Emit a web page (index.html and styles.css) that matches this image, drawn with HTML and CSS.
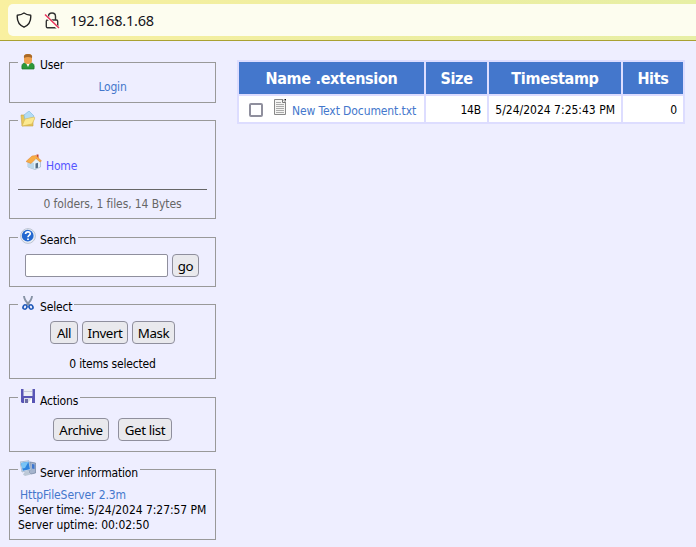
FILE: index.html
```html
<!DOCTYPE html>
<html lang="en">
<head>
<meta charset="utf-8">
<title>HFS /</title>
<link rel="stylesheet" href="styles.css">
</head>
<body>
<header class="toolbar">
  <div class="urlbar">
    <svg class="shield" width="16" height="16" viewBox="0 0 16 16"><path d="M8 1C6.300 2.300 4 3 1.300 3.200C.800 9 3.200 13.200 8 15.200C12.800 13.200 15.200 9 14.700 3.200C12 3 9.700 2.300 8 1Z" fill="none" stroke="#222" stroke-width="1.400" stroke-linejoin="round"/></svg>
    <svg class="lock" width="16" height="17" viewBox="0 0 16 17"><path d="M4.500 8V4.500Q4.500 1 8 1T11.500 4.500V8M3.500 8H12.500Q13.700 8 13.700 9.200V14.500Q13.700 15.700 12.500 15.700H3.500Q2.300 15.700 2.300 14.500V9.200Q2.300 8 3.500 8Z" fill="none" stroke="#333" stroke-width="1.400"/><path d="M1 3L14.500 16.500" stroke="#fffff0" stroke-width="3"/><path d="M1 2.500L15 16" stroke="#e8315b" stroke-width="1.500"/></svg>
    <span class="address">192.168.1.68</span>
  </div>
</header>
<main class="page">
  <aside class="sidebar">
    <section class="panel user">
      <h2 class="legend"><svg width="16" height="17" viewBox="0 0 16 17"><path d="M2 16Q1 10 5 10H11Q15 10 14 16Z" fill="#2c9838" stroke="#187526" stroke-width=".700"/><path d="M6 10L8 14L10 10Z" fill="#fff"/><rect x="4" y="1" width="8" height="10" rx="3.500" fill="#eda04d"/><path d="M4 5Q3 1 8 1T12 5Q8 3 4 5Z" fill="#a96928"/></svg><span>User</span></h2>
      <div class="login"><a>Login</a></div>
    </section>
    <section class="panel folder">
      <h2 class="legend"><svg width="16" height="17" viewBox="0 0 16 17"><path d="M1 4H5L7 6H13V15H2Z" fill="#e7c75a" stroke="#c7a345" stroke-width=".600"/><path d="M4 4L9 0L14 5L11 11L5 9Z" fill="#b3dcf6" stroke="#79b7df" stroke-width=".600"/><path d="M2 15L5 8L14 6Q15 6 14.500 8L12 13Z" fill="#fce990" stroke="#d3b451" stroke-width=".600"/></svg><span>Folder</span></h2>
      <div class="home"><svg width="16" height="16" viewBox="0 0 16 16"><path d="M2 6V13L9 15.500L14.500 13V6L9 3Z" fill="#e4f1fa" stroke="#91abc0" stroke-width=".600"/><path d="M2 8V13L8 15V9Z" fill="#bcd8eb"/><path d="M9.500 14.500V9.500L12 8.800V13.800Z" fill="#536c84"/><path d="M10.500 .500H12.500V5H10.500Z" fill="#c54028"/><path d="M0 7.500L6 2L10 1.500L15.500 7L14 8L10 4.500L5 9.500Z" fill="#f8ad45" stroke="#df8430" stroke-width=".500"/></svg><a>Home</a></div>
      <div class="totals">0 folders, 1 files, 14 Bytes</div>
    </section>
    <section class="panel search">
      <h2 class="legend"><svg width="16" height="17" viewBox="0 0 16 17"><circle cx="8" cy="8" r="7.400" fill="#e9eef6" stroke="#a9b1c0" stroke-width=".700"/><circle cx="7.700" cy="7.700" r="5.900" fill="#2468d0"/><path d="M5.500 6Q5.700 3.800 8 3.800T10.200 5.700C10.200 7.400 8 7.300 8 9.200M8 10.400V12" fill="none" stroke="#fff" stroke-width="1.700"/></svg><span>Search</span></h2>
      <div class="searchrow"><input type="text" class="query" aria-label="Search"><button class="go">go</button></div>
    </section>
    <section class="panel select">
      <h2 class="legend"><svg width="16" height="17" viewBox="0 0 16 17"><path d="M4 1Q4 5 9.500 10M12 1Q12 5 6.500 10" fill="none" stroke="#8793a5" stroke-width="1.900"/><ellipse cx="5" cy="12" rx="1.900" ry="2.200" transform="rotate(30 5 12)" fill="none" stroke="#1d58b8" stroke-width="1.600"/><ellipse cx="11" cy="12" rx="1.900" ry="2.200" transform="rotate(-30 11 12)" fill="none" stroke="#1d58b8" stroke-width="1.600"/></svg><span>Select</span></h2>
      <div class="buttons"><button class="all">All</button><button class="invert">Invert</button><button class="mask">Mask</button></div>
      <div class="count">0 items selected</div>
    </section>
    <section class="panel actions">
      <h2 class="legend"><svg width="16" height="17" viewBox="0 0 16 17"><path d="M1 1H15V15H2L1 14Z" fill="#5855b5"/><path d="M3.500 1H12.500V8H3.500Z" fill="#eceef5"/><path d="M4 3H12V4H4Z" fill="#c6cad8"/><path d="M4 10H12V15H4Z" fill="#d9dce8"/><path d="M5 11H8V15H5Z" fill="#6a6aa5"/><path d="M8 15L12 10V15Z" fill="#fff"/></svg><span>Actions</span></h2>
      <div class="buttons wide"><button class="archive">Archive</button><button class="list">Get list</button></div>
    </section>
    <section class="panel server">
      <h2 class="legend"><svg width="16" height="17" viewBox="0 0 16 17"><path d="M10 2L15.500 3V13L11 14L9 12Z" fill="#a5b4cd" stroke="#70839f" stroke-width=".700"/><path d="M12 4L14.500 4.500V9L12 8.500Z" fill="#3d76d1"/><path d="M0 2L9 .700L11 10L2 12Z" fill="#d7e2ef" stroke="#8ba2ba" stroke-width=".600"/><path d="M1 3L8.500 1.800L10 9.200L2.800 10.700Z" fill="#2d83de"/><path d="M1 3L8.500 1.800L5 8L2.300 8.500Z" fill="#78c4f6"/><path d="M5 11.500L8 11L11 14.500L5 16L3 14.500Z" fill="#bcc8d7"/></svg><span>Server information</span></h2>
      <div class="info"><a>HttpFileServer 2.3m</a><span>Server time: 5/24/2024 7:27:57 PM</span><span>Server uptime: 00:02:50</span></div>
    </section>
  </aside>
  <table class="files">
    <colgroup><col class="c-name"><col class="c-size"><col class="c-time"><col class="c-hits"></colgroup>
    <thead><tr><th>Name .extension</th><th>Size</th><th>Timestamp</th><th>Hits</th></tr></thead>
    <tbody><tr>
      <td><div class="file"><input type="checkbox" class="check" aria-label="Select file"><svg width="13" height="17" viewBox="0 0 13 17"><path d="M.500 .500H9L11.500 3V15.500H.500Z" fill="#f4f4f2" stroke="#888"/><path d="M2 3.500H7M2 5.500H10M2 7.500H10M2 9.500H10M2 11.500H10M2 13.500H10" stroke="#aaa"/><path d="M8.500 1V3.500H11" fill="none" stroke="#777"/><path d="M10 0H12V2Z" fill="#111"/></svg><a>New Text Document.txt</a></div></td>
      <td class="num">14B</td><td class="num time">5/24/2024 7:25:43 PM</td><td class="num">0</td>
    </tr></tbody>
  </table>
</main>
</body>
</html>
```
FILE: styles.css
```css
* { box-sizing: border-box; }
body { margin: 0; height: 547px; overflow: hidden; background: #eeeeff; color: #000; font: 12px/15px "DejaVu Sans Condensed", "DejaVu Sans", sans-serif; font-stretch: condensed; letter-spacing: -.18px; }
a { color: #4477cc; }
.toolbar { height: 41px; padding: 4px 0 0 8px; background: linear-gradient(90deg, #f9f0a0, #eeeea0 50%, #e7efa5); border-bottom: 1px solid #a9a132; }
.urlbar { height: 32px; display: flex; align-items: center; background: #fdfdef; border-radius: 5px 0 0 5px; padding-left: 8px; }
.lock { margin-left: 12px; }
.address { margin-left: 10px; font: 14.5px/20px "Noto Sans", sans-serif; letter-spacing: -.2px; color: #15141a; }
.page { display: flex; align-items: flex-start; }
.sidebar { width: 207px; margin: 21px 0 0 9px; display: flex; flex-direction: column; }
.panel { border: 1px solid #999; padding: 0 8px; margin-bottom: 18px; }
.legend { width: max-content; height: 20px; margin: -11px 0 0; padding: 0 2px; display: flex; gap: 4px; background: #eeeeff; font: inherit; white-space: nowrap; }
.legend svg { margin-top: 1px; }
.legend span { padding-top: 6px; }
.user { height: 41px; margin-bottom: 17px; }
.login { text-align: center; padding-top: 8px; }
.folder { height: 99px; }
.folder .legend span, .actions .legend span, .server .legend span { padding-top: 7px; }
.home { display: flex; gap: 4px; height: 60px; border-bottom: 1px solid #666; padding: 24px 0 0 8px; }
.home a { padding-top: 5px; color: #5555ff; }
.totals { text-align: center; color: #666; padding-top: 7px; letter-spacing: -.1px; }
.search { height: 50px; margin-bottom: 17px; }
.searchrow { display: flex; gap: 4px; padding: 7px 0 0 7px; }
.query { width: 143px; height: 23px; background: #fff; border: 1px solid #8f8f9d; border-radius: 2px; }
button { height: 23px; margin: 0; padding: 0; border: 1px solid #8f8f9d; border-radius: 4px; background: #e9e9ed; color: #000; font: 13.333px/20px "Noto Sans", sans-serif; letter-spacing: -.4px; white-space: nowrap; }
.go { width: 27px; }
.all { width: 28px; }
.invert { width: 46px; }
.mask { width: 43px; }
.archive { width: 56px; }
.list { width: 54px; }
.select { height: 75px; }
.buttons { display: flex; justify-content: center; gap: 4px; padding-top: 7px; }
.count { text-align: center; padding-top: 13px; }
.actions { height: 55px; margin-bottom: 17px; }
.wide { gap: 9px; padding-top: 11px; }
.server { height: 71px; }
.info { display: flex; flex-direction: column; padding-top: 9px; white-space: nowrap; letter-spacing: -.05px; }
.info a { padding-left: 2px; letter-spacing: -.1px; }
.files { width: 448px; margin: 19px 0 0 21px; table-layout: fixed; border-collapse: collapse; }
.c-name { width: 187px; }
.c-size { width: 63px; }
.c-time { width: 134px; }
.c-hits { width: 62px; }
.files th, .files td { border: 2px solid #ddddff; padding: 0; white-space: nowrap; }
.files th { height: 34px; padding-top: 2px; background: #4477cc; color: #fff; font-size: 16px; line-height: 20px; letter-spacing: -.3px; }
.files td { height: 28px; background: #fff; }
.file { display: flex; align-items: flex-start; height: 24px; padding: 2px 0 0 10px; }
.check { appearance: none; width: 14px; height: 14px; margin: 4px 11px 0 0; border: 2px solid #8f8f9d; border-radius: 2px; background: #fff; }
.file a { margin: 5px 0 0 5px; letter-spacing: -.1px; }
.files .num { text-align: right; padding: 2px 6px 0 0; }
.files .time { letter-spacing: 0; }
```
